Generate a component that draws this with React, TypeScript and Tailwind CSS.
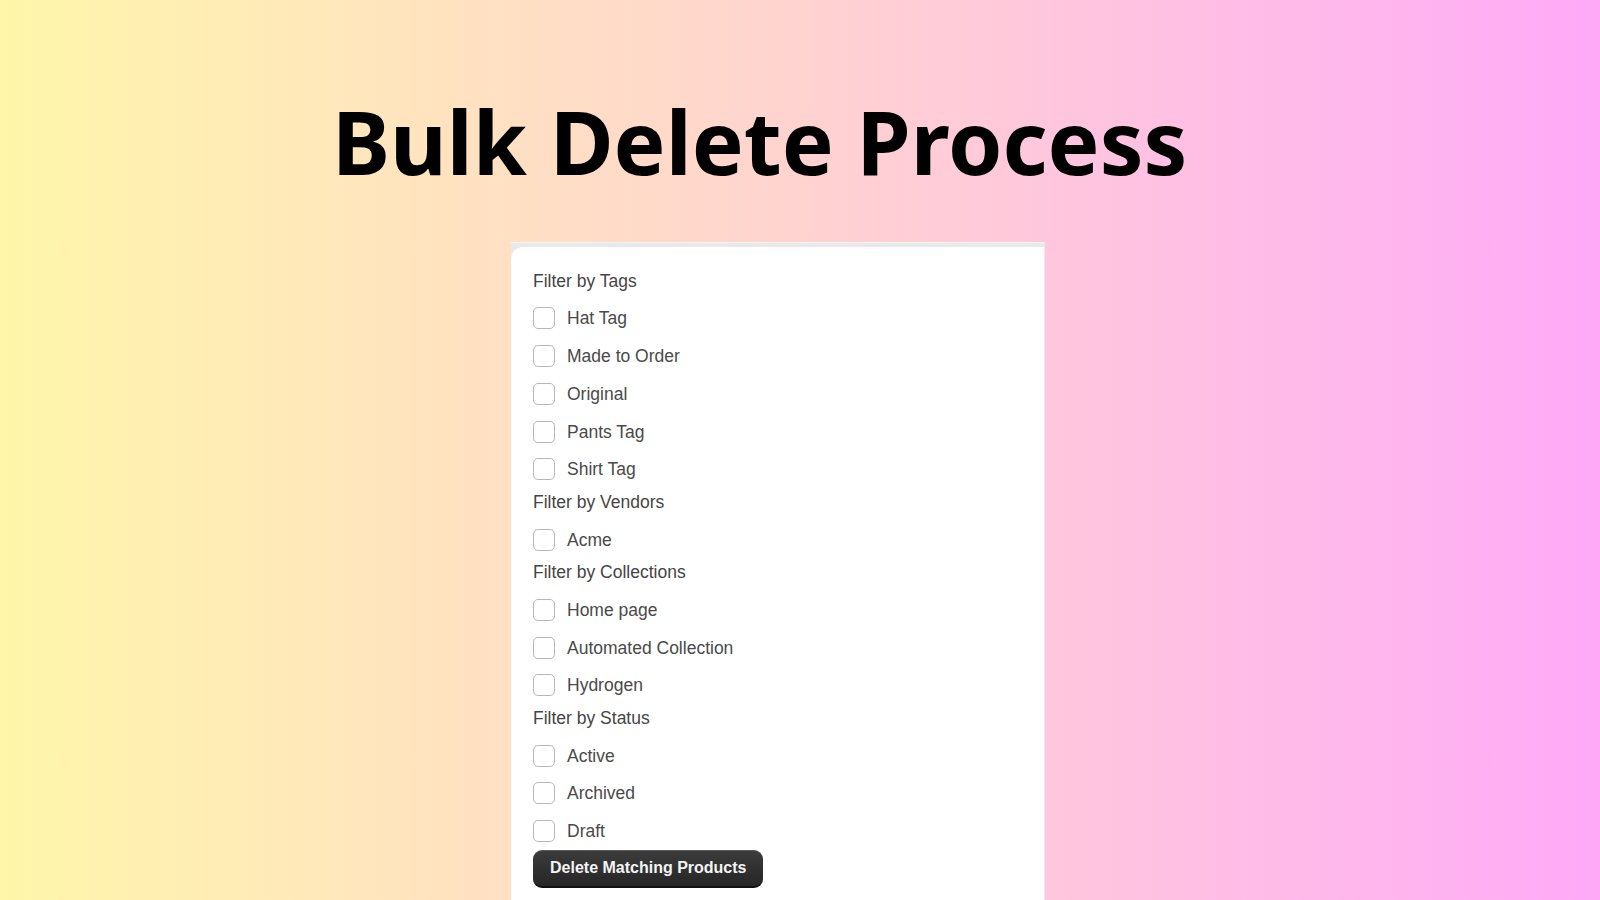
const sections = [
  { title: 'Filter by Tags', items: ['Hat Tag', 'Made to Order', 'Original', 'Pants Tag', 'Shirt Tag'] },
  { title: 'Filter by Vendors', items: ['Acme'] },
  { title: 'Filter by Collections', items: ['Home page', 'Automated Collection', 'Hydrogen'] },
  { title: 'Filter by Status', items: ['Active', 'Archived', 'Draft'] },
];

const CheckRow = ({ label }: { label: string }) => (
  <label className="flex h-[37.8px] items-center gap-[12px]">
    <span className="h-[22px] w-[22px] shrink-0 rounded-[5px] border-[1.5px] border-[#b7b7b7] bg-white" />
    <span className="text-[17.5px] text-[#4a4a4a]">{label}</span>
  </label>
);

export default function App() {
  return (
    <div
      className="flex h-[900px] w-full flex-col items-start overflow-hidden bg-gradient-to-r from-[#fff6a9] via-[#ffd3d0] to-[#ffa9f7]"
      style={{ fontFamily: '"Liberation Sans", Arial, sans-serif' }}
    >
      <h1
        className="ml-[332px] mt-[98px] h-[88px] text-[87.3px] font-bold leading-[88px] text-black"
        style={{ fontFamily: '"Noto Sans", sans-serif' }}
      >
        Bulk Delete Process
      </h1>

      <div className="ml-[511px] mt-[56px] w-[534px] flex-1 border-t border-[#f4f4f4] bg-[#e9e9e9] pt-[4px]">
        <div className="h-full rounded-tl-[12px] border-r border-[#f6e4ee] bg-white px-[22px] pt-[20px]">
          {sections.map((s) => (
            <div key={s.title}>
              <div className="mb-[5px] flex h-[27.4px] items-center text-[17.5px] text-[#454545]">{s.title}</div>
              {s.items.map((it) => (
                <CheckRow key={it} label={it} />
              ))}
            </div>
          ))}
          <button className="h-[38px] rounded-[9px] border-b-[2px] border-[#111] bg-gradient-to-b from-[#3c3c3c] to-[#262626] px-[17px] text-[16px] font-bold text-[#f4f4f4] shadow-[inset_0_1px_0_rgba(255,255,255,0.15)]">
            Delete Matching Products
          </button>
        </div>
      </div>
    </div>
  );
}
